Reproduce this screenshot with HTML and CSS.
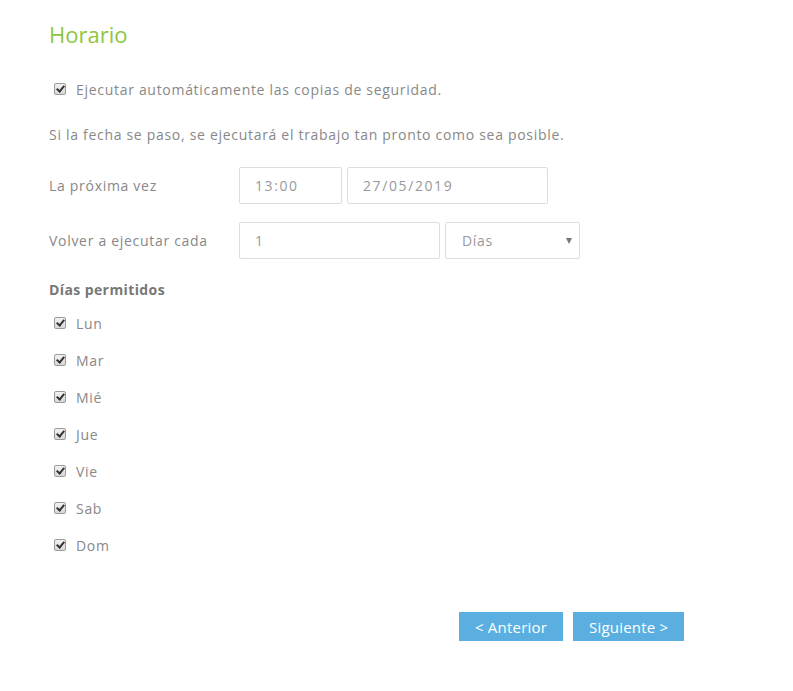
FILE: index.html
```html
<!DOCTYPE html>
<html lang="es">
<head>
<meta charset="utf-8">
<title>Horario</title>
<link rel="stylesheet" href="styles.css">
</head>
<body>
<main class="schedule">
  <h1 class="title">Horario</h1>

  <label class="check auto">
    <input type="checkbox" checked>
    <span>Ejecutar automáticamente las copias de seguridad.</span>
  </label>

  <p class="note">Si la fecha se paso, se ejecutará el trabajo tan pronto como sea posible.</p>

  <div class="row">
    <span class="row-label">La próxima vez</span>
    <input class="field time" type="text" value="13:00">
    <input class="field date" type="text" value="27/05/2019">
  </div>

  <div class="row">
    <span class="row-label">Volver a ejecutar cada</span>
    <input class="field count" type="text" value="1">
    <div class="select">
      <span>Días</span>
      <span class="caret"></span>
    </div>
  </div>

  <h2 class="days-title">Días permitidos</h2>
  <ul class="days">
    <li><label class="check"><input type="checkbox" checked><span>Lun</span></label></li>
    <li><label class="check"><input type="checkbox" checked><span>Mar</span></label></li>
    <li><label class="check"><input type="checkbox" checked><span>Mié</span></label></li>
    <li><label class="check"><input type="checkbox" checked><span>Jue</span></label></li>
    <li><label class="check"><input type="checkbox" checked><span>Vie</span></label></li>
    <li><label class="check"><input type="checkbox" checked><span>Sab</span></label></li>
    <li><label class="check"><input type="checkbox" checked><span>Dom</span></label></li>
  </ul>

  <div class="actions">
    <button class="btn" type="button">&lt; Anterior</button>
    <button class="btn" type="button">Siguiente &gt;</button>
  </div>
</main>
</body>
</html>
```

FILE: styles.css
```css
* { box-sizing: border-box; }

html, body {
  margin: 0;
  background: #ffffff;
}

body {
  font-family: "Open Sans", "DejaVu Sans", sans-serif;
  font-size: 14px;
  letter-spacing: 0.7px;
  color: #888888;
}

.schedule {
  padding: 18px 0 0 49px;
  width: 793px;
}

.title {
  margin: 0;
  font-size: 22px;
  font-weight: 400;
  letter-spacing: 0;
  color: #8cc63e;
  line-height: 32px;
}

.check {
  display: flex;
  align-items: center;
  gap: 10px;
  height: 20px;
}

/* old-style grey checkbox with a dark tick */
.check input {
  appearance: none;
  -webkit-appearance: none;
  position: relative;
  margin: 0 0 0 5px;
  width: 12px;
  height: 12px;
  border: 1px solid #9a9a9a;
  border-radius: 2px;
  background: linear-gradient(#f2f2f2, #d8d8d8);
}

.check input:checked::after {
  content: "";
  position: absolute;
  left: 3px;
  top: 0px;
  width: 3px;
  height: 6px;
  border: solid #333;
  border-width: 0 2px 2px 0;
  transform: rotate(40deg);
}

.auto {
  margin-top: 29px;
}

.note {
  margin: 26px 0 0;
  line-height: 20px;
}

.row {
  display: flex;
  align-items: center;
  margin-top: 22px;
  height: 37px;
}

.row + .row {
  margin-top: 18px;
}

.row-label {
  width: 190px;
}

.field {
  height: 37px;
  border: 1px solid #dddddd;
  border-radius: 2px;
  padding: 0 14px 0 15px;
  font: inherit;
  letter-spacing: 1.6px;
  color: #999999;
  background: #fff;
}

.time { width: 103px; }
.date { width: 201px; margin-left: 5px; }
.count { width: 201px; }

.select {
  width: 135px;
  height: 37px;
  margin-left: 5px;
  border: 1px solid #dddddd;
  border-radius: 2px;
  padding: 0 6px 0 16px;
  display: flex;
  align-items: center;
  justify-content: space-between;
  color: #999999;
}

.caret {
  width: 0;
  height: 0;
  border-left: 3px solid transparent;
  border-right: 3px solid transparent;
  border-top: 6px solid #777;
  margin-right: 1px;
}

.days-title {
  margin: 21px 0 0;
  font-size: 14px;
  font-weight: 700;
  letter-spacing: 0.4px;
  color: #777777;
  line-height: 20px;
}

.days {
  list-style: none;
  margin: 13px 0 0;
  padding: 0;
  display: flex;
  flex-direction: column;
  gap: 17px;
}

.actions {
  display: flex;
  gap: 10px;
  margin: 57px 0 0 410px;
}

.btn {
  height: 29px;
  border: 0;
  background: #5aafe0;
  color: #ffffff;
  font: inherit;
  font-size: 15px;
  letter-spacing: 0.2px;
  padding: 0 16px;
  cursor: pointer;
}
```
